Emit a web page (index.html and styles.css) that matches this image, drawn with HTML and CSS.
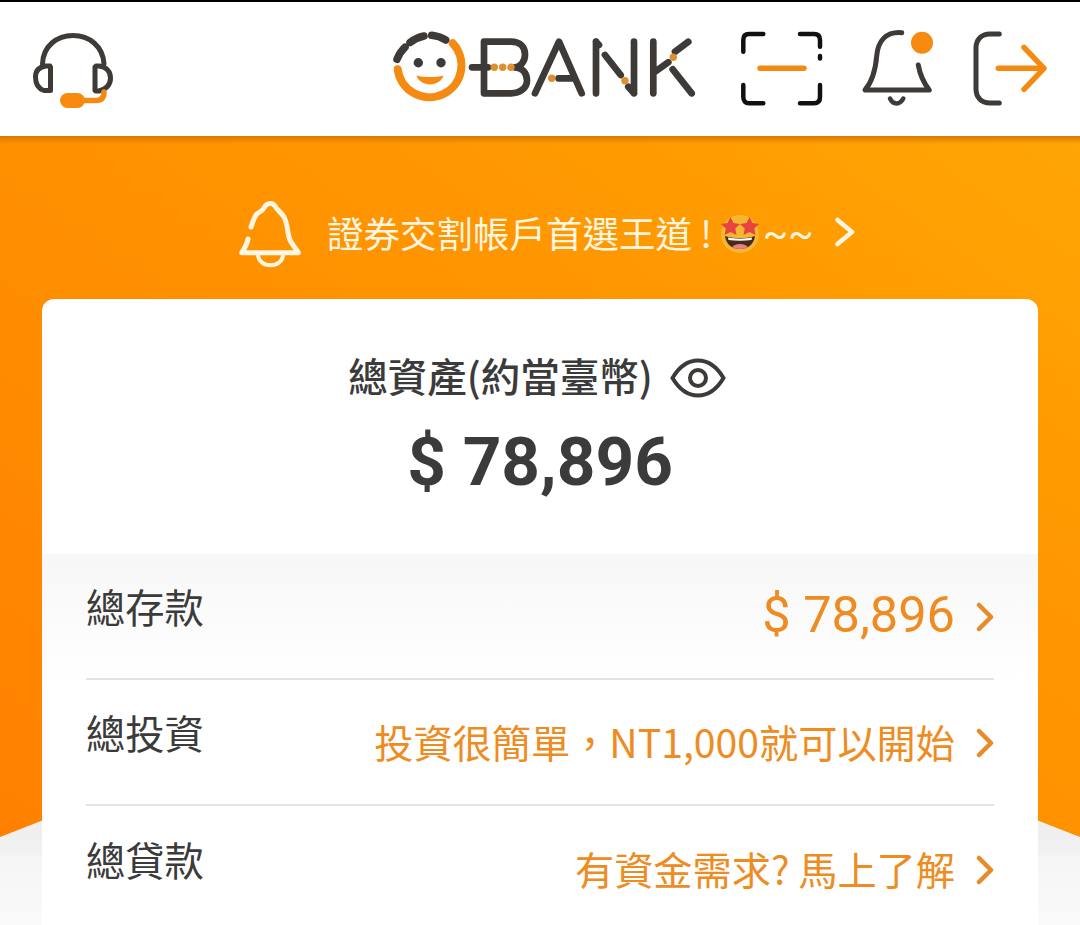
FILE: index.html
```html
<!DOCTYPE html>
<html lang="zh-Hant">
<head>
<meta charset="utf-8">
<title>O-Bank</title>
<link rel="stylesheet" href="styles.css">
</head>
<body>
<div class="page">
  <header class="topbar">
    <svg class="ico-headset" viewBox="30 30 86 80" width="86" height="80" fill="none" stroke-linecap="round" stroke-linejoin="round">
      <path class="dark" d="M42.500 64C43 46 57 35.500 73 35.500S103 46 104 64"/>
      <path class="dark" d="M50 66H46C39 67 35.500 71 35.500 77C35.500 84 38 88.500 44 90.500H50.500V67Z"/>
      <path class="dark" d="M96 66H99C107 67 110.500 72 110.500 78C110.500 85 106 89 99 91H96C94.500 91 95 90 95 88V67Z"/>
      <path class="orange" d="M104 92C104 98 101 100.500 96 100.500H84"/>
      <rect class="fill-orange" x="60" y="93" width="25" height="15" rx="7.500"/>
    </svg>
    <svg class="ico-logo" viewBox="390 30 308 76" width="308" height="76" fill="none" stroke-linecap="round" stroke-linejoin="round">
      <path class="logo-ring" d="M452.700 43.300A32 32 0 1 1 397.700 69.300"/>
      <path class="logo-dash" d="M397 59.300A33 33 0 0 1 405 47.300M410 42.500A33 33 0 0 1 424 36M431.700 35.300A33 33 0 0 1 445.700 40"/>
      <circle class="fill-dark" cx="418.300" cy="62.700" r="4.700"/>
      <circle class="fill-dark" cx="441" cy="62.700" r="4.700"/>
      <path class="fill-orange" d="M416.500 75.500C424 77.500 436 77.500 443.500 75.500C442 81 436 84.500 430 84.500S418 81 416.500 75.500Z"/>
      <path class="logo-line" d="M472 67.300H488M484 41.700H511C520 41.700 525 47 525 54.500S520 67.300 515 67.300C522 67.300 527 73 527 80.500S520 93.300 511 93.300H484Z"/>
      <path class="logo-line" d="M535 93.300L559 41.700L581.700 93.300M558.500 78.300H575"/>
      <path class="logo-line" d="M596 41.700V93.300M596 41.700L599 45M605 55L620.700 75M628.300 86.700L634 93.300M634 41.700V93.300"/>
      <path class="logo-line" d="M653.300 41.700V93.300M688.300 41.700L675 51.700M668.300 62.300L655 71.700M672.700 69.300L691.700 93.300"/>
      <g class="fill-dot">
        <circle cx="494.300" cy="67.300" r="3.700"/><circle cx="502.700" cy="67.300" r="3.700"/><circle cx="511" cy="67.300" r="3.700"/>
        <circle cx="551.700" cy="78.300" r="3.700"/><circle cx="625" cy="80.700" r="3.700"/><circle cx="673.300" cy="57.300" r="3.700"/>
      </g>
    </svg>
    <svg class="ico-scan" viewBox="738 30 88 78" width="88" height="78" fill="none" stroke-linecap="round" stroke-linejoin="round">
      <path class="black" d="M763.300 34H749C745.500 34 743.300 36 743.300 40V51.700M800 34H814C818 34 820 36 820 40V46.700M820 56V58.500M743.300 85V97C743.300 101 745.500 103.300 749 103.300H763.300M820 85V97C820 101 818 103.300 814 103.300H800"/>
      <path class="orange" d="M760 68.300H804"/>
    </svg>
    <svg class="ico-bell" viewBox="860 28 76 80" width="76" height="80" fill="none" stroke-linecap="round" stroke-linejoin="round">
      <path class="dark" d="M901.700 32.700C886 31.500 878 41 876.700 56C875.500 70 872 82 865 90H929.300C923 82 920 75 918.300 65"/>
      <path class="dark-thin" d="M890 98.500C893 105 900 105 903.300 98.500"/>
      <circle class="fill-orange" cx="922" cy="42.700" r="11"/>
    </svg>
    <svg class="ico-exit" viewBox="970 30 80 78" width="80" height="78" fill="none" stroke-linecap="round" stroke-linejoin="round">
      <path class="dark" d="M999.300 34H990C981 34 976 40 976 48V89C976 97 981 103 990 103H999.300"/>
      <path class="orange" d="M998.300 68.300H1043.500M1024 47.300L1044 68.300L1024 89.300"/>
    </svg>
  </header>

  <main class="hero">
    <div class="notice">
      <svg class="ico-notice-bell" viewBox="238 198 64 70" width="64" height="70" fill="none" stroke-linecap="round" stroke-linejoin="round">
        <path class="white" d="M251 226C253 221 253 219 256 214C258 211 262 211 264 207C266 202 272 201 275 205C277 209 281 211 284 216C288 223 287 232 290 239C292 244 296 247 298.300 251.700H241.700C244 248 247 244 248 238"/>
        <path class="white-thin" d="M258 253C258 268 283 268 283 253"/>
      </svg>
      <span class="notice-text">證券交割帳戶首選王道 !</span>
      <svg class="ico-emoji" viewBox="0 0 40 40" width="40" height="40">
        <circle cx="20" cy="20" r="19" fill="#f5b72f"/>
        <path d="M4 20C4 9 9 4 20 2C10 4 6 10 5 20Z" fill="#fdd94f"/>
        <path class="star" d="M10.500 3L13.500 9L20 10L15.300 14.500L16.500 21L10.500 18L4.500 21L5.700 14.500L1 10L7.500 9Z"/>
        <path class="star" d="M29.500 3L32.500 9L39 10L34.300 14.500L35.500 21L29.500 18L23.500 21L24.700 14.500L20 10L26.500 9Z"/>
        <path d="M5 22C14 25 26 25 35 22C34 31 27 35 20 35S6 31 5 22Z" fill="#4a2a1a"/>
        <path d="M8 23.500C15 25 25 25 32 23.500L31.500 26C24 27 16 27 8.500 26Z" fill="#fff"/>
        <path d="M12 33C16 29 24 29 28 33C24 35.500 16 35.500 12 33Z" fill="#e5808c"/>
      </svg>
      <span class="notice-tilde">~~</span>
      <svg class="ico-notice-chevron" viewBox="0 0 22 30" width="22" height="30" fill="none" stroke-linecap="round" stroke-linejoin="round">
        <path class="chevron-line" d="M3.500 3L18 15L3.500 27"/>
      </svg>
    </div>

    <section class="card">
      <div class="summary">
        <div class="summary-title">
          <span>總資產(約當臺幣)</span>
          <svg class="ico-eye" viewBox="0 0 56 42" width="56" height="42" fill="none">
            <path class="eye-line" d="M2.500 21C9 10 18 3.500 28 3.500S47 10 53.500 21C47 32 38 38.500 28 38.500S9 32 2.500 21Z"/>
            <circle class="eye-line" cx="28" cy="21" r="8"/>
          </svg>
        </div>
        <div class="summary-amount">$ 78,896</div>
      </div>
      <div class="rows">
        <div class="row">
          <span class="row-label">總存款</span>
          <span class="row-value row-value-num">$ 78,896</span>
          <svg class="ico-chevron" viewBox="0 0 18 30" width="18" height="30" fill="none"><path d="M3 3L15 15L3 27"/></svg>
        </div>
        <div class="row">
          <span class="row-label">總投資</span>
          <span class="row-value">投資很簡單，NT1,000就可以開始</span>
          <svg class="ico-chevron" viewBox="0 0 18 30" width="18" height="30" fill="none"><path d="M3 3L15 15L3 27"/></svg>
        </div>
        <div class="row">
          <span class="row-label">總貸款</span>
          <span class="row-value">有資金需求? 馬上了解</span>
          <svg class="ico-chevron" viewBox="0 0 18 30" width="18" height="30" fill="none"><path d="M3 3L15 15L3 27"/></svg>
        </div>
      </div>
    </section>
  </main>
</div>
</body>
</html>
```
FILE: styles.css
```css
* { box-sizing: border-box; }
html, body { margin: 0; height: 100%; overflow: hidden; }
body {
  background: #fafafa;
  color: #3b3b3b;
  font-family: "Noto Sans CJK TC", "Noto Sans", Roboto, sans-serif;
}
svg { display: block; flex: none; }

.page {
  width: 1080px;
  height: 925px;
  overflow: hidden;
  background: linear-gradient(#eeeeee 810px, #f1f1f1 855px, #f6f6f6 856px, #fafafa 925px);
}

.topbar {
  height: 136px;
  border-top: 2px solid #000;
  background: #fff;
  display: flex;
  align-items: flex-start;
  padding: 0 30px;
}
.ico-headset { margin: 28px 0 0; }
.ico-logo { margin: 28px 0 0 274px; }
.ico-scan { margin: 28px 0 0 40px; }
.ico-bell { margin: 26px 0 0 34px; }
.ico-exit { margin: 28px 0 0 34px; }

.dark { stroke: #3d3a38; stroke-width: 5; }
.dark-thin { stroke: #3d3a38; stroke-width: 4.500; }
.eye-line { stroke: #3d3a38; stroke-width: 4; }
.black { stroke: #111; stroke-width: 4.500; }
.orange { stroke: #f58a12; stroke-width: 5.500; }
.white { stroke: #fff6e2; stroke-width: 5; }
.white-thin { stroke: #fff6e2; stroke-width: 4; }
.chevron-line { stroke: #fff6e2; stroke-width: 4.500; }
.fill-dark { fill: #3d3a38; }
.fill-orange { fill: #f78a0f; }
.fill-dot { fill: #e08f2e; }
.logo-ring { stroke: #f58a12; stroke-width: 8; }
.logo-dash { stroke: #3d3a38; stroke-width: 7.500; }
.logo-line { stroke: #3d3a38; stroke-width: 6.700; }
.star { fill: #e8443f; }

.hero { position: relative; height: 789px; }
.hero::before {
  content: "";
  position: absolute;
  left: 0;
  right: 0;
  top: 0;
  height: 701px;
  background: linear-gradient(215deg, #ffa505 0%, #ff9600 35%, #ff8000 100%);
  clip-path: polygon(0 0, 100% 0, 100% 100%, 50% 70%, 0 100%);
}
.hero::after {
  content: "";
  position: absolute;
  left: 0;
  right: 0;
  top: 0;
  height: 8px;
  background: linear-gradient(#d97a00, rgba(217, 122, 0, 0));
}
.notice {
  position: relative;
  z-index: 1;
  height: 163px;
  padding: 32px 0 0 238px;
  display: flex;
  align-items: center;
  color: #fff6e2;
}
.notice-text { font-size: 36.500px; margin-left: 25px; white-space: nowrap; line-height: 1; }
.ico-emoji { margin-left: 8px; }
.notice-tilde { font-size: 37px; margin-left: 3px; line-height: 1; font-family: Roboto, sans-serif; }
.ico-notice-chevron { margin: -3px 0 0 21px; }

.card {
  position: relative;
  z-index: 1;
  margin: 0 42px;
  background: #fff;
  border-radius: 12px 12px 0 0;
  overflow: hidden;
}
.summary { height: 255px; padding-top: 48px; text-align: center; }
.summary-title {
  display: flex;
  align-items: center;
  justify-content: center;
  gap: 17px;
  padding-right: 6px;
  font-size: 39.500px;
  font-weight: 500;
  line-height: 56px;
}
.ico-eye { margin-top: 6px; }
.summary-amount { font-size: 67.500px; font-weight: 700; line-height: 96px; margin-top: 11px; font-family: Roboto, "Noto Sans", sans-serif; }

.rows {
  background: linear-gradient(#f7f7f7, #ffffff 130px);
  padding: 0 44px;
}
.row {
  height: 126px;
  display: flex;
  align-items: center;
  border-bottom: 2px solid #e3e3e3;
}
.row:last-child { border-bottom: 0; }
.row-label { font-size: 39.300px; line-height: 56px; margin-top: -20px; white-space: nowrap; }
.row-value { margin-left: auto; color: #ee8c22; font-size: 39.200px; line-height: 56px; white-space: nowrap; margin-top: -2px; }
.row-value-num { font-size: 50.500px; font-family: Roboto, "Noto Sans", sans-serif; }
.ico-chevron { margin: 2px 0 0 21px; }
.ico-chevron path { stroke: #e58c28; stroke-width: 4.500; stroke-linecap: round; stroke-linejoin: round; }
```
